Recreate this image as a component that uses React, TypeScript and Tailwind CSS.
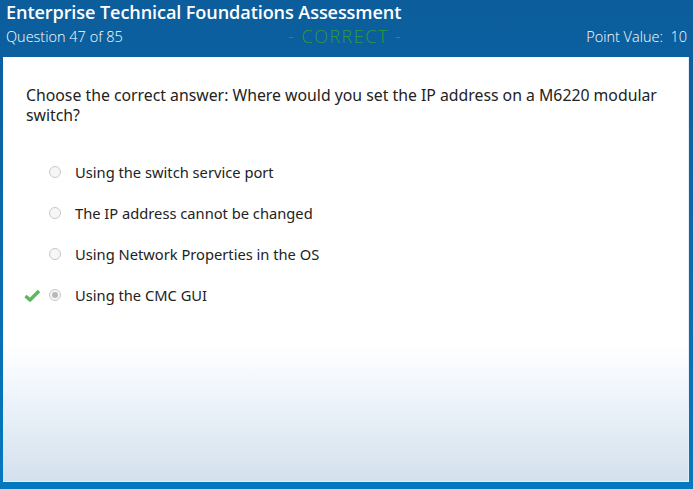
const options = [
  "Using the switch service port",
  "The IP address cannot be changed",
  "Using Network Properties in the OS",
  "Using the CMC GUI",
];

const Check = () => (
  <svg width="16" height="13" viewBox="0 0 16 13">
    <path d="M1.5 7 L6 11 L15 2" fill="none" stroke="#5cb85c" strokeWidth="3.4" strokeLinejoin="round" />
  </svg>
);

export default function App() {
  return (
    <div className="w-[693px] h-[489px] flex flex-col bg-gradient-to-b from-[#0c5d9b] via-[#0a6aad] to-[#0479bf] font-['Open_Sans',sans-serif] overflow-hidden">
      <header className="h-[57px] px-[6px] text-white shrink-0">
        <h1 className="text-[18.1px] font-semibold leading-[24px] tracking-[-0.1px]">
          Enterprise Technical Foundations Assessment
        </h1>
        <div className="flex items-center text-[14.5px] font-light leading-[26px]">
          <span className="w-[282px]">Question 47 of 85</span>
          <span className="text-[#2f9a3a] text-[18px] leading-[20px] -mt-[3px] tracking-[1.5px]">- CORRECT -</span>
          <span className="ml-auto">Point Value:&nbsp; 10</span>
        </div>
      </header>
      <main className="flex-1 ml-[3px] mr-[4px] mb-[7px] bg-gradient-to-b from-white from-[68%] via-[#f2f6fc] via-[78%] to-[#d3e1ed] border-r border-b border-[#e8eef4] font-['Noto_Sans',sans-serif] text-[#222]">
        <p className="pl-[23px] pt-[28px] text-[15.8px] leading-[20px] w-[672px]">
          Choose the correct answer: Where would you set the IP address on a M6220 modular switch?
        </p>
        <ul className="mt-[37px] flex flex-col gap-[21px]">
          {options.map((o, i) => (
            <li key={o} className="flex items-center h-[20px] text-[14.7px]">
              <span className="w-[46px] flex justify-end pr-[9px]">{i === 3 && <Check />}</span>
              <span className="w-[12px] h-[12px] rounded-full border border-[#c9c9c9] bg-[#f6f6f6] flex items-center justify-center">
                {i === 3 && <span className="w-[6px] h-[6px] rounded-full bg-[#b8b8b8]" />}
              </span>
              <span className="ml-[14px]">{o}</span>
            </li>
          ))}
        </ul>
      </main>
    </div>
  );
}
